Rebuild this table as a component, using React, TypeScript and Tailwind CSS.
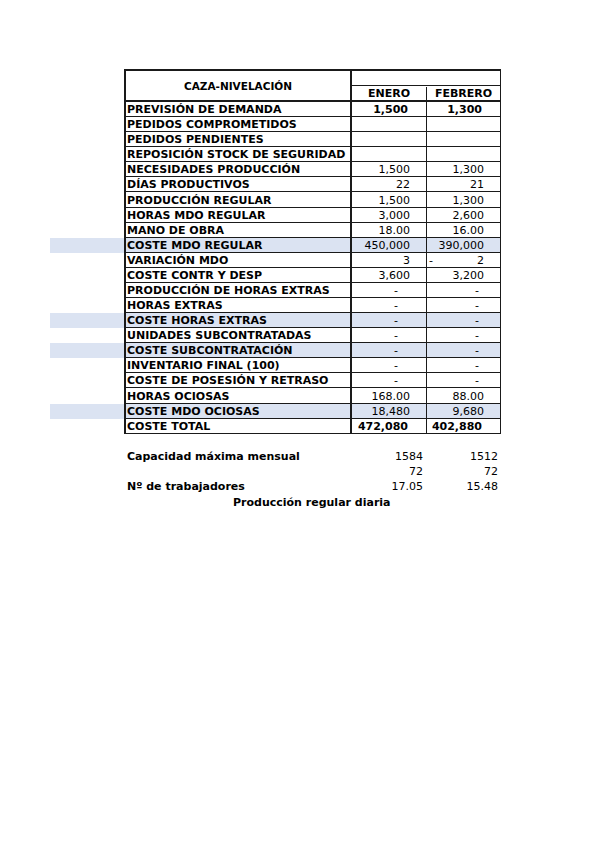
type Row = {
  label: string;
  e: string;
  f: string;
  bold?: boolean;
  hl?: boolean;
  fNeg?: boolean;
};

const rows: Row[] = [
  { label: 'PREVISIÓN DE DEMANDA', e: '1,500', f: '1,300', bold: true },
  { label: 'PEDIDOS COMPROMETIDOS', e: '', f: '' },
  { label: 'PEDIDOS PENDIENTES', e: '', f: '' },
  { label: 'REPOSICIÓN STOCK DE SEGURIDAD', e: '', f: '' },
  { label: 'NECESIDADES PRODUCCIÓN', e: '1,500', f: '1,300' },
  { label: 'DÍAS PRODUCTIVOS', e: '22', f: '21' },
  { label: 'PRODUCCIÓN REGULAR', e: '1,500', f: '1,300' },
  { label: 'HORAS MDO REGULAR', e: '3,000', f: '2,600' },
  { label: 'MANO DE OBRA', e: '18.00', f: '16.00' },
  { label: 'COSTE MDO REGULAR', e: '450,000', f: '390,000', hl: true },
  { label: 'VARIACIÓN MDO', e: '3', f: '2', fNeg: true },
  { label: 'COSTE CONTR Y DESP', e: '3,600', f: '3,200' },
  { label: 'PRODUCCIÓN DE HORAS EXTRAS', e: '-', f: '-' },
  { label: 'HORAS EXTRAS', e: '-', f: '-' },
  { label: 'COSTE HORAS EXTRAS', e: '-', f: '-', hl: true },
  { label: 'UNIDADES SUBCONTRATADAS', e: '-', f: '-' },
  { label: 'COSTE SUBCONTRATACIÓN', e: '-', f: '-', hl: true },
  { label: 'INVENTARIO FINAL (100)', e: '-', f: '-' },
  { label: 'COSTE DE POSESIÓN Y RETRASO', e: '-', f: '-' },
  { label: 'HORAS OCIOSAS', e: '168.00', f: '88.00' },
  { label: 'COSTE MDO OCIOSAS', e: '18,480', f: '9,680', hl: true },
  { label: 'COSTE TOTAL', e: '472,080', f: '402,880', bold: true },
];

// accounting-style cell: dash for zero, optional leading minus
const Value: React.FC<{ v: string; bold?: boolean; neg?: boolean; last?: boolean }> = ({ v, bold, neg, last }) => {
  if (!v) return null;
  if (v === '-') return <span className={`ml-auto ${last ? 'pr-[21px]' : 'pr-[28px]'}`}>-</span>;
  return (
    <>
      {neg && <span className="pl-[2px]">-</span>}
      <span className={`ml-auto ${bold ? 'font-bold pr-[18px]' : 'pr-[16px]'}`}>{v}</span>
    </>
  );
};

const App: React.FC = () => {
  return (
    <div
      className="min-h-screen bg-white pt-[69px] pl-[50px] text-[11px] leading-none text-black"
      style={{ fontFamily: '"DejaVu Sans", Verdana, sans-serif' }}
    >
      <div className="w-[451px]">
        {/* header */}
        <div className="flex">
          <div className="w-[74px]" />
          <div className="w-[377px] h-[33px] flex border-t-2 border-b-2 border-l-2 border-r border-[#1a1a1a]">
            <div className="w-[226px] border-r-2 border-[#1a1a1a] flex items-center justify-center font-bold text-[10.5px] pt-[1px]">
              CAZA-NIVELACIÓN
            </div>
            <div className="flex-1 flex flex-col">
              <div className="h-[15px] border-b border-[#1a1a1a]" />
              <div className="flex-1 flex font-bold pt-[1px]">
                <div className="w-[75px] border-r border-[#1a1a1a] flex items-center justify-center">ENERO</div>
                <div className="flex-1 flex items-center justify-center">FEBRERO</div>
              </div>
            </div>
          </div>
        </div>

        {/* data rows */}
        {rows.map((r) => (
          <div key={r.label} className={`flex h-[15.09px] ${r.hl ? 'bg-[#dbe3f2]' : ''}`}>
            <div className="w-[74px]" />
            <div className="w-[377px] flex border-l-2 border-r border-b border-[#1a1a1a]">
              <div className="w-[226px] border-r-2 border-[#1a1a1a] flex items-center font-bold pl-[1px] pt-[1px] whitespace-nowrap">
                {r.label}
              </div>
              <div className="w-[75px] border-r border-[#1a1a1a] flex items-center pt-[1px]">
                <Value v={r.e} bold={r.bold} />
              </div>
              <div className="flex-1 flex items-center pt-[1px]">
                <Value v={r.f} bold={r.bold} neg={r.fNeg} last />
              </div>
            </div>
          </div>
        ))}

        {/* summary */}
        <div className="h-[15.09px]" />
        <div className="pl-[74px]">
          <div className="flex h-[15.09px] items-center pt-[1px]">
            <span className="w-[228px] pl-[3px] font-bold">Capacidad máxima mensual</span>
            <span className="w-[71px] text-right">1584</span>
            <span className="w-[75px] text-right">1512</span>
          </div>
          <div className="flex h-[15.09px] items-center pt-[1px]">
            <span className="w-[228px]" />
            <span className="w-[71px] text-right">72</span>
            <span className="w-[75px] text-right">72</span>
          </div>
          <div className="flex h-[15.09px] items-center pt-[1px]">
            <span className="w-[228px] pl-[3px] font-bold">Nº de trabajadores</span>
            <span className="w-[71px] text-right">17.05</span>
            <span className="w-[75px] text-right">15.48</span>
          </div>
          <div className="flex h-[15.09px] items-center pt-[1px]">
            <span className="pl-[109px] font-bold">Producción regular diaria</span>
          </div>
        </div>
      </div>
    </div>
  );
};

export default App;
